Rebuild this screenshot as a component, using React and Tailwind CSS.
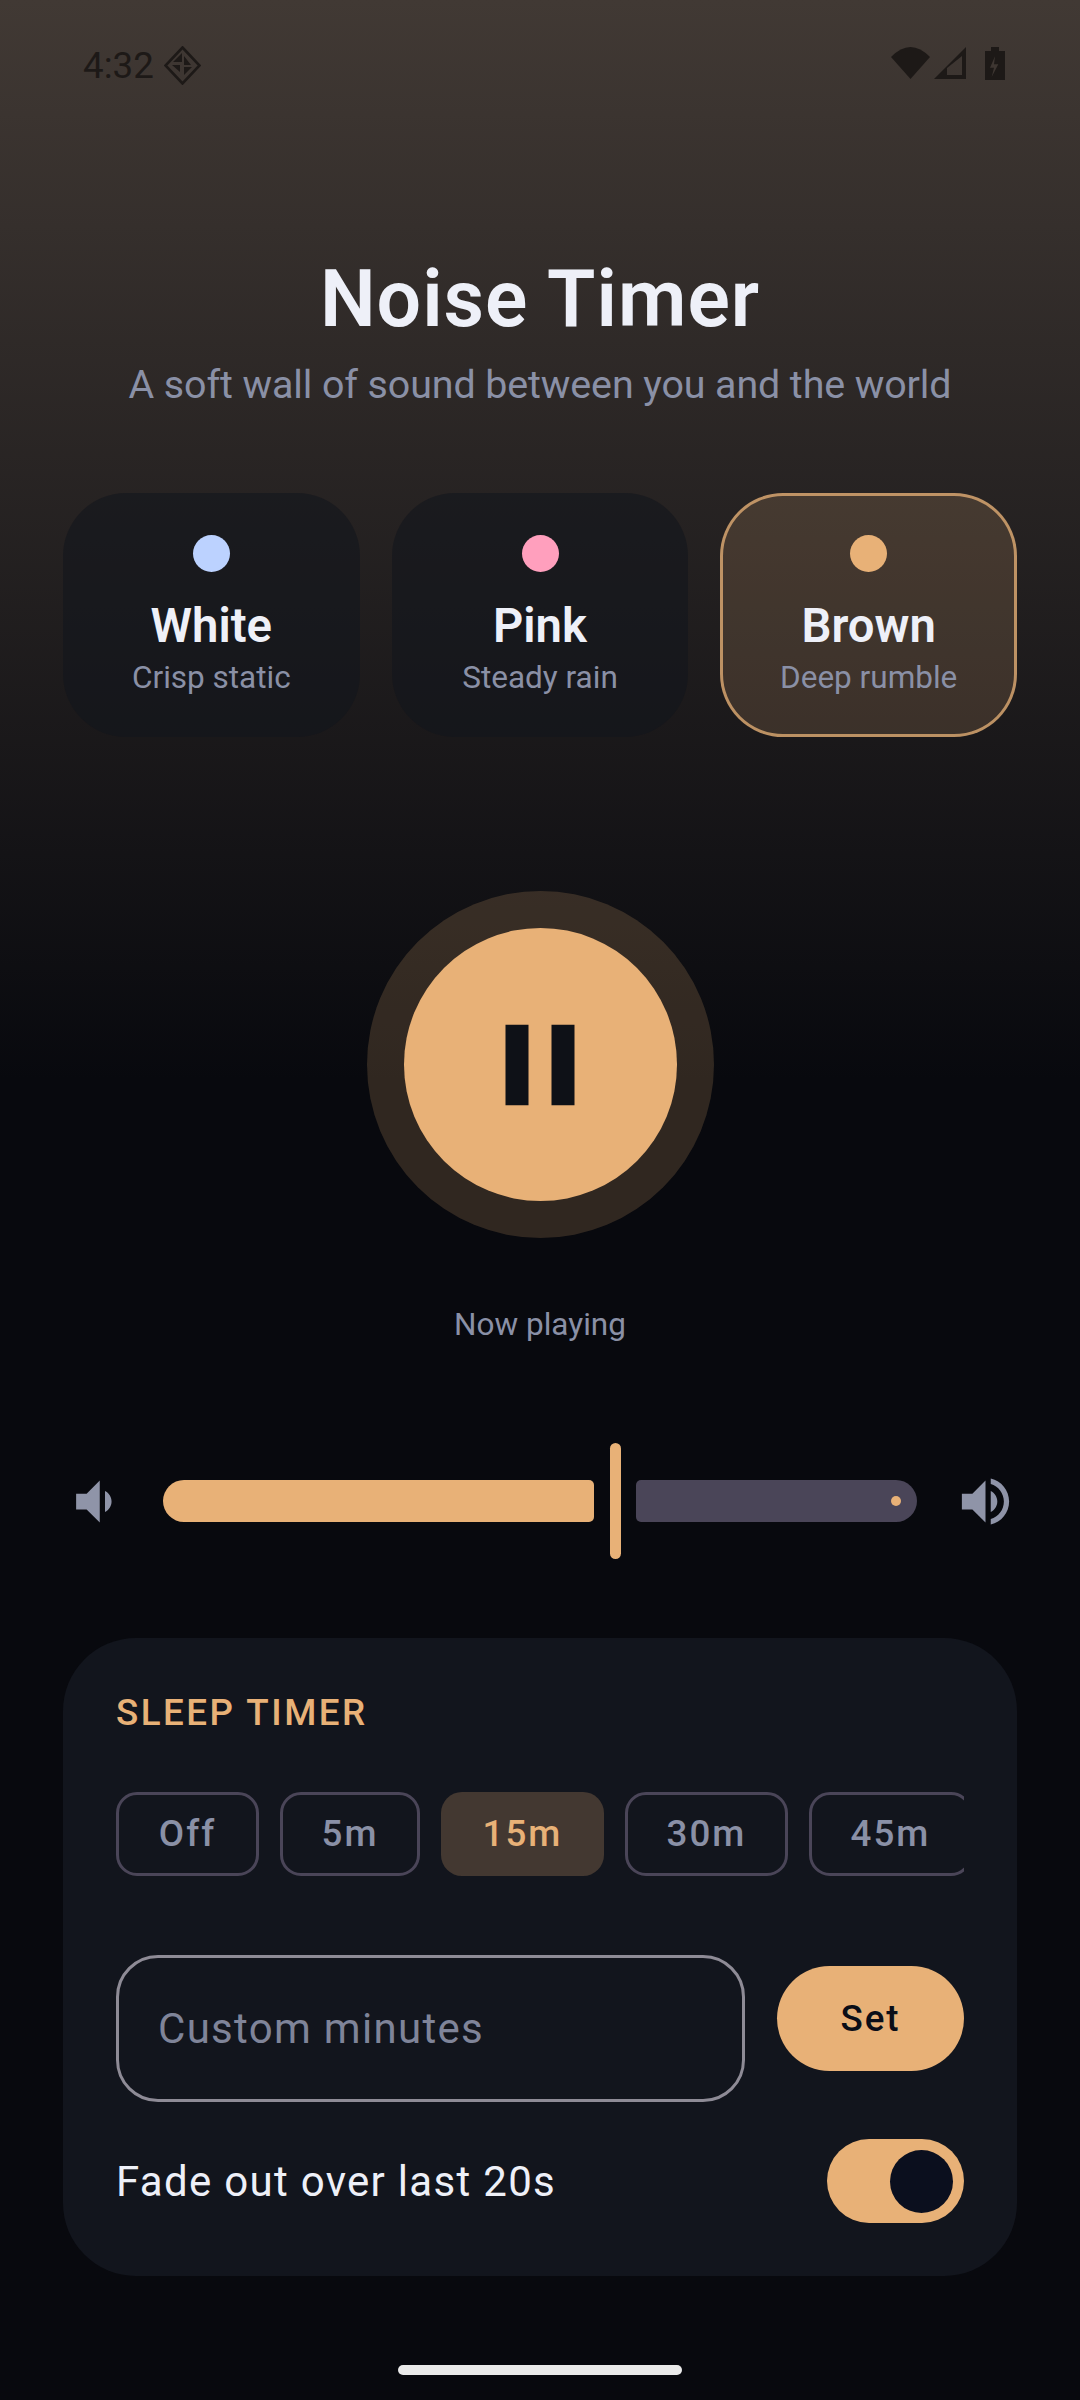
const NOISE_TYPES = [
  { name: "White", hint: "Crisp static", dot: "bg-[#bcd2ff]" },
  { name: "Pink", hint: "Steady rain", dot: "bg-[#ff9fbd]" },
  { name: "Brown", hint: "Deep rumble", dot: "bg-[#e8b177]", active: true },
];

const TIMER_CHIPS = [
  { label: "Off", width: "w-[143px]" },
  { label: "5m", width: "w-[140px]" },
  { label: "15m", width: "w-[163px]", active: true },
  { label: "30m", width: "w-[163px]" },
  { label: "45m", width: "w-[163px]" },
];

function StatusBar() {
  return (
    <div className="flex items-start justify-between h-[39px] mt-[46px] pl-[83px] pr-[75px] text-[#1d1917] shrink-0">
      <div className="flex items-center gap-[10px]">
        <span className="text-[36.75px] leading-[39px]">4:32</span>
        <svg width="37" height="39" viewBox="0 0 37 39" fill="currentColor">
          <path d="M18.5 1.5 L35.5 19.5 L18.5 37.5 L1.5 19.5 Z" fill="none" stroke="currentColor" strokeWidth="2.6" />
          <path d="M18 7 V16 H9 Z M20 10 L27 19 H20 Z M8 19 H16 V26 Z M20 21 H28 L20 29 Z" />
        </svg>
      </div>
      <div className="flex items-start mt-[1px]">
        <svg width="39" height="32" viewBox="0 0 39 32" fill="currentColor" className="mr-[4px]">
          <path d="M19.5 32 L0 10 Q19.5 -10 39 10 Z" />
        </svg>
        <svg width="32" height="32" viewBox="0 0 32 32" fill="currentColor" fillRule="evenodd" className="mr-[19px]">
          <path d="M32 0 V32 H0 Z M13 21 V28 H28 V9 Z" />
        </svg>
        <svg width="20" height="33" viewBox="0 0 20 33" fill="currentColor" fillRule="evenodd">
          <path d="M6 0 H14 V4 H20 V33 H0 V4 H6 Z M10 9.3 L5 20.7 H9 L6.7 30 L13.3 17.3 H9 Z" />
        </svg>
      </div>
    </div>
  );
}

function NoiseCard({ name, hint, dot, active }) {
  return (
    <button
      className={`flex-1 h-[244px] rounded-[63px] flex flex-col items-center pt-[39px] border-[3px] ${
        active ? "bg-[#e8b177]/[0.165] border-[#e8b177]/75" : "bg-[#12151d]/60 border-transparent"
      }`}
    >
      <span className={`w-[37px] h-[37px] rounded-full ${dot}`} />
      <span className="mt-[23px] text-[47.25px] leading-[62px] font-semibold text-[#eef0f8]">{name}</span>
      <span className="text-[31.5px] leading-[42px] text-[#8a90a6]">{hint}</span>
    </button>
  );
}

function VolumeRow() {
  return (
    <div className="flex items-center gap-[37px] px-[63px] mt-[97px] h-[116px] shrink-0">
      <svg width="63" height="63" viewBox="0 0 24 24" fill="#8f94a8" className="shrink-0">
        <path d="M18.5 12c0-1.77-1.02-3.29-2.5-4.03v8.05c1.48-.73 2.5-2.25 2.5-4.02zM5 9v6h4l5 5V4L9 9H5z" />
      </svg>
      <div className="flex-1 flex items-center">
        <div className="w-[431px] h-[42px] bg-[#e8b177] rounded-l-[21px] rounded-r-[5px]" />
        <div className="w-[11px] h-[116px] ml-[16px] mr-[15px] rounded-full bg-[#e8b177]" />
        <div className="relative flex-1 h-[42px] bg-[#4a4558] rounded-r-[21px] rounded-l-[5px]">
          <span className="absolute right-[16px] top-[16px] w-[10px] h-[10px] rounded-full bg-[#e8b177]" />
        </div>
      </div>
      <svg width="63" height="63" viewBox="0 0 24 24" fill="#8f94a8" className="shrink-0">
        <path d="M3 9v6h4l5 5V4L7 9H3zm13.5 3c0-1.77-1.02-3.29-2.5-4.03v8.05c1.48-.73 2.5-2.25 2.5-4.02zM14 3.23v2.06c2.89.86 5 3.54 5 6.71s-2.11 5.85-5 6.71v2.06c4.01-.91 7-4.49 7-8.77s-2.99-7.86-7-8.77z" />
      </svg>
    </div>
  );
}

function SleepTimer() {
  return (
    <div className="mx-[63px] mt-[79px] h-[638px] shrink-0 rounded-[73px] bg-[#12151d] px-[53px] pt-[52px]">
      <div className="text-[36.75px] leading-[46px] font-medium tracking-[2.5px] text-[#e8b177]">SLEEP TIMER</div>

      {/* Chips run past the panel padding and get clipped */}
      <div className="flex gap-[21px] mt-[56px] overflow-hidden">
        {TIMER_CHIPS.map((chip) => (
          <button
            key={chip.label}
            className={`shrink-0 h-[84px] rounded-[21px] text-[36.75px] font-medium tracking-[2px] ${chip.width} ${
              chip.active ? "bg-[#433831] text-[#e8b177]" : "border-[3px] border-[#4a4558] text-[#8a90a6]"
            }`}
          >
            {chip.label}
          </button>
        ))}
      </div>

      <div className="flex items-start justify-between mt-[79px]">
        <input
          readOnly
          placeholder="Custom minutes"
          className="w-[629px] h-[147px] rounded-[42px] border-[3px] border-[#8e8b96] bg-transparent pl-[39px] text-[42px] tracking-[1.3px] placeholder:text-[#7f8499] outline-none"
        />
        <button className="w-[187px] h-[105px] mt-[11px] rounded-full bg-[#e8b177] text-[36.75px] font-medium tracking-[2px] text-[#0b0e17]">
          Set
        </button>
      </div>

      <div className="flex items-center justify-between mt-[37px]">
        <span className="text-[42px] tracking-[1.3px] text-[#eef0f8]">Fade out over last 20s</span>
        <button className="flex items-center justify-end w-[137px] h-[84px] pr-[11px] rounded-full bg-[#e8b177]">
          <span className="w-[63px] h-[63px] rounded-full bg-[#0b0f1e]" />
        </button>
      </div>
    </div>
  );
}

export default function App() {
  return (
    <div
      className="w-[1080px] h-[2400px] flex flex-col bg-[linear-gradient(to_bottom,#413934_0px,#08090e_1080px)] overflow-hidden"
      style={{ fontFamily: "Roboto, sans-serif" }}
    >
      <StatusBar />

      <div className="mt-[168px] text-center shrink-0">
        <h1 className="text-[78.75px] leading-[92px] font-semibold tracking-[1px] text-[#eef0f8]">Noise Timer</h1>
        <p className="mt-[14px] text-[39.4px] leading-[52px] tracking-[-0.1px] text-[#8a90a6]">
          A soft wall of sound between you and the world
        </p>
      </div>

      <div className="flex gap-[32px] px-[63px] mt-[82px] shrink-0">
        {NOISE_TYPES.map((noise) => (
          <NoiseCard key={noise.name} {...noise} />
        ))}
      </div>

      <div className="flex flex-col items-center mt-[154px] shrink-0">
        <div className="w-[347px] h-[347px] rounded-full bg-[#e8b177]/[0.18] flex items-center justify-center">
          <button className="w-[273px] h-[273px] rounded-full bg-[#e8b177] flex items-center justify-center">
            <svg width="138" height="138" viewBox="0 0 24 24" fill="#0e1117">
              <path d="M6 19h4V5H6zm8-14v14h4V5z" />
            </svg>
          </button>
        </div>
        <span className="mt-[66px] text-[31.5px] leading-[42px] text-[#8a90a6]">Now playing</span>
      </div>

      <VolumeRow />
      <SleepTimer />

      <div className="mt-[89px] mx-auto w-[284px] h-[10px] shrink-0 rounded-full bg-[#eaeaea]" />
    </div>
  );
}
